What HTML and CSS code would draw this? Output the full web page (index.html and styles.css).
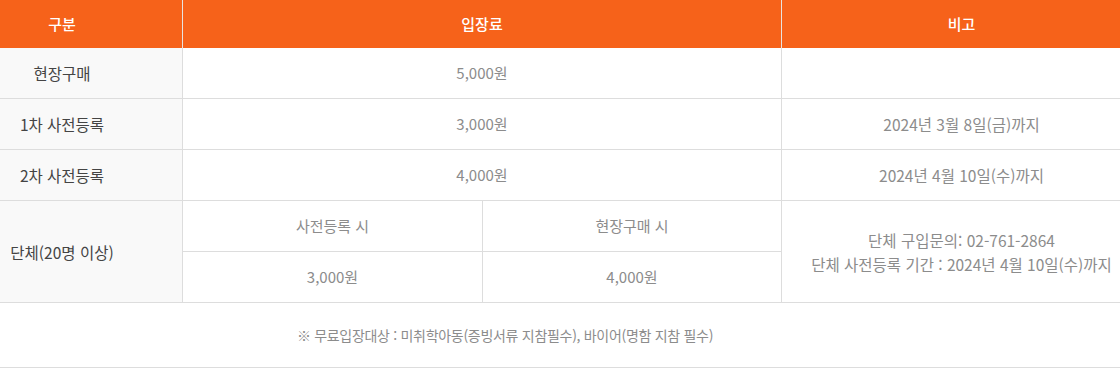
FILE: index.html
```html
<!DOCTYPE html>
<html lang="ko">
<head>
<meta charset="utf-8">
<link rel="stylesheet" href="styles.css">
</head>
<body>
<table class="fee">
  <colgroup>
    <col class="c1"><col class="c2a"><col class="c2b"><col class="c3">
  </colgroup>
  <thead>
    <tr>
      <th class="first">구분</th>
      <th colspan="2">입장료</th>
      <th class="note last">비고</th>
    </tr>
  </thead>
  <tbody>
    <tr>
      <td class="first">현장구매</td>
      <td colspan="2">5,000원</td>
      <td class="note last"></td>
    </tr>
    <tr>
      <td class="first">1차 사전등록</td>
      <td colspan="2">3,000원</td>
      <td class="note last">2024년 3월 8일(금)까지</td>
    </tr>
    <tr>
      <td class="first">2차 사전등록</td>
      <td colspan="2">4,000원</td>
      <td class="note last">2024년 4월 10일(수)까지</td>
    </tr>
    <tr>
      <td class="first" rowspan="2">단체(20명 이상)</td>
      <td>사전등록 시</td>
      <td>현장구매 시</td>
      <td class="note last" rowspan="2">단체 구입문의: 02-761-2864<br>단체 사전등록 기간 : 2024년 4월 10일(수)까지</td>
    </tr>
    <tr>
      <td>3,000원</td>
      <td>4,000원</td>
    </tr>
    <tr>
      <td class="foot last" colspan="4">※ 무료입장대상 : 미취학아동(증빙서류 지참필수), 바이어(명함 지참 필수)</td>
    </tr>
  </tbody>
</table>
</body>
</html>
```

FILE: styles.css
```css
html, body {
  margin: 0;
  padding: 0;
  background: #ffffff;
}

body {
  font-family: "Noto Sans CJK KR", "Noto Sans", sans-serif;
  font-size: 15px;
  color: #888888;
}

.fee {
  width: 1120px;
  table-layout: fixed;
  border-collapse: separate;
  border-spacing: 0;
}

.c1 { width: 183px; }
.c2a { width: 300px; }
.c2b { width: 299px; }
.c3 { width: 338px; }

.fee th,
.fee td {
  box-sizing: border-box;
  padding: 0;
  text-align: center;
  vertical-align: middle;
  line-height: 24px;
}

.fee th {
  height: 48px;
  background: #f6621a;
  color: #ffffff;
  font-weight: 500;
  border-right: 1px solid #e9e3df;
}

.fee td {
  height: 51px;
  border-right: 1px solid #dddddd;
  border-bottom: 1px solid #dddddd;
  color: #8c8c8c;
}

.fee .first {
  padding-right: 58px;
}

.fee td.first {
  background: #f9f9f9;
  color: #444444;
  font-size: 15.5px;
}

.fee .note {
  padding-left: 21px;
}

.fee td.note {
  font-size: 15.5px;
}

.fee .last {
  border-right: none;
}

.fee td.foot {
  height: 65px;
  padding-right: 110px;
  font-size: 14px;
  letter-spacing: -0.3px;
}
```
